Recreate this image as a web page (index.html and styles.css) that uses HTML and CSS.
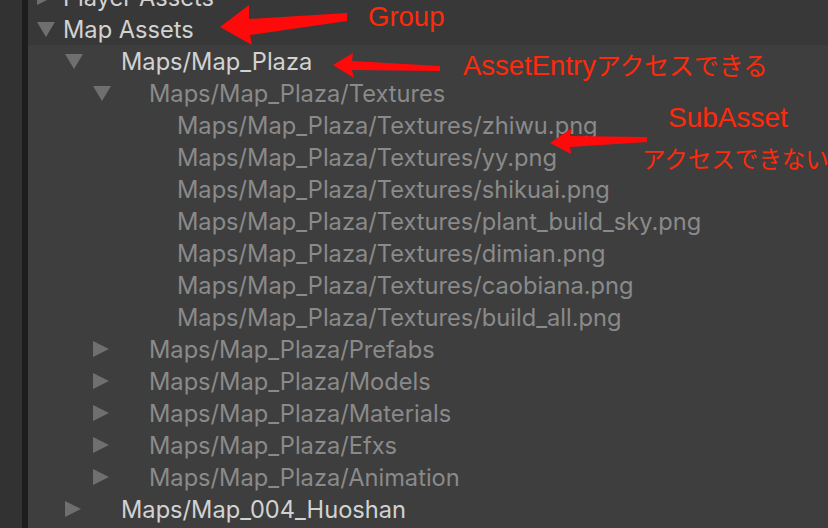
FILE: index.html
```html
<!DOCTYPE html>
<html lang="ja">
<head>
<meta charset="utf-8">
<title>Addressables Groups</title>
<link rel="stylesheet" href="styles.css">
</head>
<body>
<div class="window">
  <div class="side"></div>
  <div class="divider"></div>
  <div class="tree">
    <div class="groups">
      <div class="row l0"><span class="tri"><svg width="16" height="16" viewBox="0 0 16 16"><polygon points="0,0 16,8 0,16"/></svg></span><span class="label main">Player Assets</span></div>
      <div class="row l0"><span class="tri"><svg width="18" height="15" viewBox="0 0 18 15"><polygon points="0,0 18,0 9,15"/></svg></span><span class="label main">Map Assets</span></div>
    </div>
    <div class="entries">
      <div class="row l1"><span class="tri"><svg width="18" height="15" viewBox="0 0 18 15"><polygon points="0,0 18,0 9,15"/></svg></span><span class="label main">Maps/Map_Plaza</span></div>
      <div class="row l2"><span class="tri"><svg width="18" height="15" viewBox="0 0 18 15"><polygon points="0,0 18,0 9,15"/></svg></span><span class="label sub">Maps/Map_Plaza/Textures</span></div>
      <div class="row l3"><span class="tri"></span><span class="label sub">Maps/Map_Plaza/Textures/zhiwu.png</span></div>
      <div class="row l3"><span class="tri"></span><span class="label sub">Maps/Map_Plaza/Textures/yy.png</span></div>
      <div class="row l3"><span class="tri"></span><span class="label sub">Maps/Map_Plaza/Textures/shikuai.png</span></div>
      <div class="row l3"><span class="tri"></span><span class="label sub">Maps/Map_Plaza/Textures/plant_build_sky.png</span></div>
      <div class="row l3"><span class="tri"></span><span class="label sub">Maps/Map_Plaza/Textures/dimian.png</span></div>
      <div class="row l3"><span class="tri"></span><span class="label sub">Maps/Map_Plaza/Textures/caobiana.png</span></div>
      <div class="row l3"><span class="tri"></span><span class="label sub">Maps/Map_Plaza/Textures/build_all.png</span></div>
      <div class="row l2"><span class="tri"><svg width="16" height="16" viewBox="0 0 16 16"><polygon points="0,0 16,8 0,16"/></svg></span><span class="label sub">Maps/Map_Plaza/Prefabs</span></div>
      <div class="row l2"><span class="tri"><svg width="16" height="16" viewBox="0 0 16 16"><polygon points="0,0 16,8 0,16"/></svg></span><span class="label sub">Maps/Map_Plaza/Models</span></div>
      <div class="row l2"><span class="tri"><svg width="16" height="16" viewBox="0 0 16 16"><polygon points="0,0 16,8 0,16"/></svg></span><span class="label sub">Maps/Map_Plaza/Materials</span></div>
      <div class="row l2"><span class="tri"><svg width="16" height="16" viewBox="0 0 16 16"><polygon points="0,0 16,8 0,16"/></svg></span><span class="label sub">Maps/Map_Plaza/Efxs</span></div>
      <div class="row l2"><span class="tri"><svg width="16" height="16" viewBox="0 0 16 16"><polygon points="0,0 16,8 0,16"/></svg></span><span class="label sub">Maps/Map_Plaza/Animation</span></div>
      <div class="row l1"><span class="tri"><svg width="16" height="16" viewBox="0 0 16 16"><polygon points="0,0 16,8 0,16"/></svg></span><span class="label main">Maps/Map_004_Huoshan</span></div>
    </div>
  </div>
</div>

<svg class="arrows" width="828" height="528" viewBox="0 0 828 528">
  <polygon points="220,27 249,5 249,19 347,13 347,21 250,35 252,45"/>
  <polygon points="333,65 353,53 352,61 440,66 440,71 352,70 354,78"/>
  <polygon points="550,143 572,128 570,136 647,137 647,142 570,147 571,154"/>
</svg>
<div class="note note-group">Group</div>
<div class="note note-entry">AssetEntry<span class="kana">アクセスできる</span></div>
<div class="note note-sub">SubAsset</div>
<div class="note note-sub2"><span class="kana">アクセスできない</span></div>
</body>
</html>
```
FILE: styles.css
```css
html, body {
  margin: 0;
  padding: 0;
  width: 828px;
  height: 528px;
  overflow: hidden;
  background: #3e3e3e;
}

.window {
  display: flex;
  height: 528px;
  font-family: Inter, "Noto Sans", sans-serif;
}

.side {
  width: 22px;
  background: #323232;
  flex: none;
}

.divider {
  width: 6px;
  background: #1d1d1d;
  flex: none;
}

.tree {
  flex: 1;
  display: flex;
  flex-direction: column;
  margin-top: -19px;
}

.groups {
  background: #383838;
}

.entries {
  background: #3e3e3e;
}

.row {
  height: 32px;
  display: flex;
  align-items: center;
  white-space: nowrap;
}

.tri {
  display: flex;
  align-items: center;
  flex: none;
}

.tri svg {
  fill: #6f6f6f;
  display: block;
  margin-left: 1px;
}

.l0 { padding-left: 8px; }
.l0 .tri { width: 27px; }
.l1 { padding-left: 36px; }
.l1 .tri { width: 57px; }
.l2 { padding-left: 64px; }
.l2 .tri { width: 57px; }
.l3 { padding-left: 149px; }
.l3 .tri { width: 0; }

.label {
  font-size: 23.65px;
  line-height: 32px;
  position: relative;
  top: 1px;
}

.main { color: #d2d2d2; }
.sub { color: #8a8a8a; }

.arrows {
  position: absolute;
  left: 0;
  top: 0;
  fill: #ff0a0a;
}

.note {
  position: absolute;
  color: #ff2a0a;
  font-family: "Liberation Sans", Arial, sans-serif;
  font-size: 27.5px;
  line-height: 1;
  white-space: nowrap;
}

.kana {
  font-family: "Noto Sans CJK JP", sans-serif;
  font-size: 24.8px;
}

.note-group { left: 368px; top: 3px; }
.note-entry { left: 463px; top: 52px; }
.note-sub { left: 668px; top: 104px; font-size: 28px; }
.note-sub2 { left: 642px; top: 145px; }
.note-sub2 .kana { font-size: 23.5px; }
```
